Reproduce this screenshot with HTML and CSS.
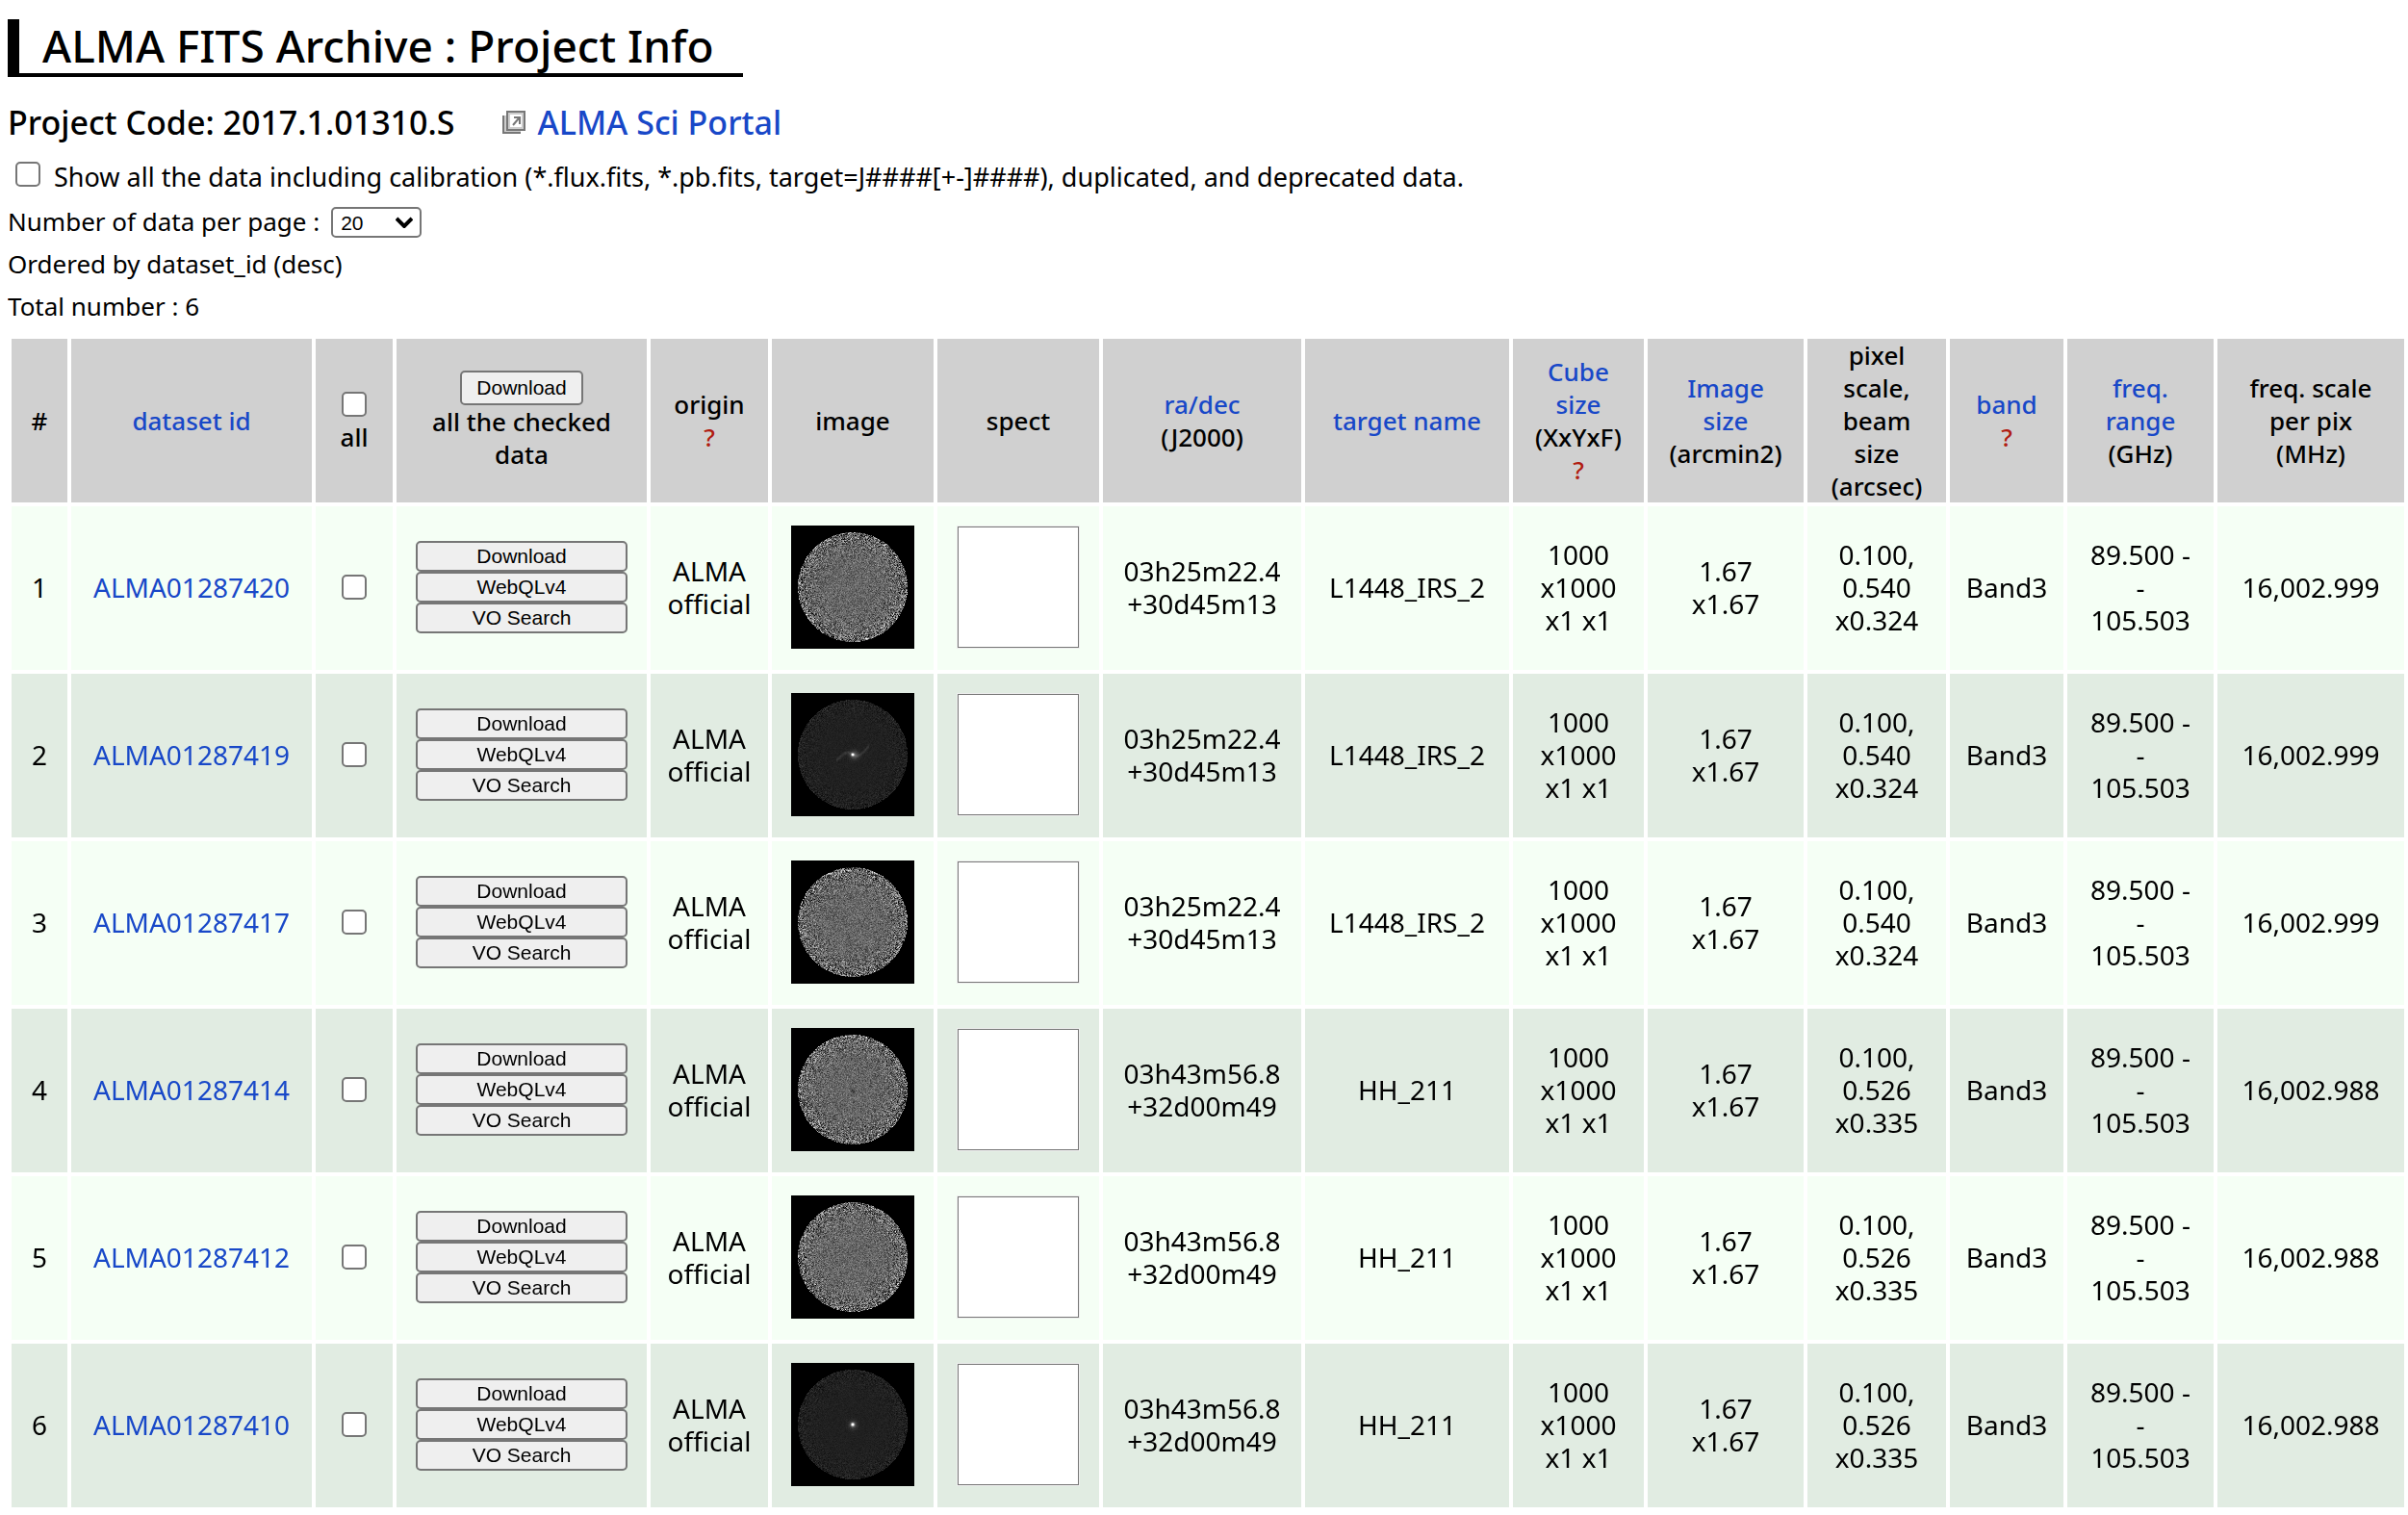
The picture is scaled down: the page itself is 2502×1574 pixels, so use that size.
FILE: index.html
```html
<!DOCTYPE html>
<html lang="en">
<head>
<meta charset="utf-8">
<title>ALMA FITS Archive : Project Info</title>
<link rel="stylesheet" href="styles.css">
</head>
<body>
<header>
  <h1>ALMA FITS Archive : Project Info</h1>
  <h2 class="project">
    <span>Project Code: 2017.1.01310.S</span>
    <a class="portal" href="#portal">
      <svg class="ext" viewBox="0 0 24 24" aria-hidden="true">
        <path d="M1 5V23H19" fill="none" stroke="#777" stroke-width="2"/>
        <path d="M3 5V21H19" fill="none" stroke="#ccc" stroke-width="2"/>
        <rect x="5" y="1" width="18" height="19" fill="#fff" stroke="#777" stroke-width="2"/>
        <rect x="7" y="3" width="14" height="15" fill="none" stroke="#ccc" stroke-width="2"/>
        <path d="M11 15L17 8M12 7H18V14" fill="none" stroke="#777" stroke-width="2"/>
      </svg>
      <span>ALMA Sci Portal</span>
    </a>
  </h2>
</header>
<form class="options">
  <div class="line show"><input type="checkbox" id="showall"><label for="showall">Show all the data including calibration (*.flux.fits, *.pb.fits, target=J####[+-]####), duplicated, and deprecated data.</label></div>
  <div class="line"><label for="perpage">Number of data per page :</label><span class="pick"><select id="perpage"><option>20</option><option>50</option><option>100</option></select><svg class="chev" viewBox="0 0 18 12" aria-hidden="true"><path d="M1 2L9 10L17 2" fill="none" stroke="#000" stroke-width="4"/></svg></span></div>
  <p class="line">Ordered by dataset_id (desc)</p>
  <p class="line">Total number : 6</p>
</form>
<table class="data">
  <colgroup><col class="c-num"><col class="c-id"><col class="c-all"><col class="c-dl"><col class="c-origin"><col class="c-pic"><col class="c-pic"><col class="c-radec"><col class="c-target"><col class="c-cube"><col class="c-size"><col class="c-scale"><col class="c-band"><col class="c-freq"><col class="c-pix"></colgroup>
  <thead>
  <tr>
    <th>#</th>
    <th><a href="#id">dataset id</a></th>
    <th><input type="checkbox" id="all"><label for="all">all</label></th>
    <th><button class="get" type="button">Download</button>all the checked<br>data</th>
    <th>origin<br><a class="help" href="#h1">?</a></th>
    <th>image</th>
    <th>spect</th>
    <th><a href="#radec">ra/dec</a><br>(J2000)</th>
    <th><a href="#target">target name</a></th>
    <th><a href="#cube">Cube<br>size</a><br>(XxYxF)<br><a class="help" href="#h2">?</a></th>
    <th><a href="#size">Image<br>size</a><br>(arcmin2)</th>
    <th>pixel<br>scale,<br>beam<br>size<br>(arcsec)</th>
    <th><a href="#band">band</a><br><a class="help" href="#h3">?</a></th>
    <th><a href="#freq">freq.<br>range</a><br>(GHz)</th>
    <th>freq. scale<br>per pix<br>(MHz)</th>
  </tr>
  </thead>
  <tbody>
  <tr>
    <td>1</td><td><a href="#d1">ALMA01287420</a></td><td><input type="checkbox" aria-label="ALMA01287420"></td>
    <td><button type="button">Download</button><button type="button">WebQLv4</button><button type="button">VO Search</button></td>
    <td>ALMA<br>official</td><td class="pic"><canvas class="sky" width="128" height="128" data-kind="noise"></canvas></td><td class="pic"><div class="spect"></div></td>
    <td>03h25m22.4<br>+30d45m13</td><td>L1448_IRS_2</td><td>1000<br>x1000<br>x1 x1</td><td>1.67<br>x1.67</td><td>0.100,<br>0.540<br>x0.324</td><td>Band3</td><td>89.500 -<br>-<br>105.503</td><td>16,002.999</td>
  </tr>
  <tr>
    <td>2</td><td><a href="#d2">ALMA01287419</a></td><td><input type="checkbox" aria-label="ALMA01287419"></td>
    <td><button type="button">Download</button><button type="button">WebQLv4</button><button type="button">VO Search</button></td>
    <td>ALMA<br>official</td><td class="pic"><canvas class="sky" width="128" height="128" data-kind="wings"></canvas></td><td class="pic"><div class="spect"></div></td>
    <td>03h25m22.4<br>+30d45m13</td><td>L1448_IRS_2</td><td>1000<br>x1000<br>x1 x1</td><td>1.67<br>x1.67</td><td>0.100,<br>0.540<br>x0.324</td><td>Band3</td><td>89.500 -<br>-<br>105.503</td><td>16,002.999</td>
  </tr>
  <tr>
    <td>3</td><td><a href="#d3">ALMA01287417</a></td><td><input type="checkbox" aria-label="ALMA01287417"></td>
    <td><button type="button">Download</button><button type="button">WebQLv4</button><button type="button">VO Search</button></td>
    <td>ALMA<br>official</td><td class="pic"><canvas class="sky" width="128" height="128" data-kind="noise"></canvas></td><td class="pic"><div class="spect"></div></td>
    <td>03h25m22.4<br>+30d45m13</td><td>L1448_IRS_2</td><td>1000<br>x1000<br>x1 x1</td><td>1.67<br>x1.67</td><td>0.100,<br>0.540<br>x0.324</td><td>Band3</td><td>89.500 -<br>-<br>105.503</td><td>16,002.999</td>
  </tr>
  <tr>
    <td>4</td><td><a href="#d4">ALMA01287414</a></td><td><input type="checkbox" aria-label="ALMA01287414"></td>
    <td><button type="button">Download</button><button type="button">WebQLv4</button><button type="button">VO Search</button></td>
    <td>ALMA<br>official</td><td class="pic"><canvas class="sky" width="128" height="128" data-kind="dip"></canvas></td><td class="pic"><div class="spect"></div></td>
    <td>03h43m56.8<br>+32d00m49</td><td>HH_211</td><td>1000<br>x1000<br>x1 x1</td><td>1.67<br>x1.67</td><td>0.100,<br>0.526<br>x0.335</td><td>Band3</td><td>89.500 -<br>-<br>105.503</td><td>16,002.988</td>
  </tr>
  <tr>
    <td>5</td><td><a href="#d5">ALMA01287412</a></td><td><input type="checkbox" aria-label="ALMA01287412"></td>
    <td><button type="button">Download</button><button type="button">WebQLv4</button><button type="button">VO Search</button></td>
    <td>ALMA<br>official</td><td class="pic"><canvas class="sky" width="128" height="128" data-kind="noise"></canvas></td><td class="pic"><div class="spect"></div></td>
    <td>03h43m56.8<br>+32d00m49</td><td>HH_211</td><td>1000<br>x1000<br>x1 x1</td><td>1.67<br>x1.67</td><td>0.100,<br>0.526<br>x0.335</td><td>Band3</td><td>89.500 -<br>-<br>105.503</td><td>16,002.988</td>
  </tr>
  <tr>
    <td>6</td><td><a href="#d6">ALMA01287410</a></td><td><input type="checkbox" aria-label="ALMA01287410"></td>
    <td><button type="button">Download</button><button type="button">WebQLv4</button><button type="button">VO Search</button></td>
    <td>ALMA<br>official</td><td class="pic"><canvas class="sky" width="128" height="128" data-kind="star"></canvas></td><td class="pic"><div class="spect"></div></td>
    <td>03h43m56.8<br>+32d00m49</td><td>HH_211</td><td>1000<br>x1000<br>x1 x1</td><td>1.67<br>x1.67</td><td>0.100,<br>0.526<br>x0.335</td><td>Band3</td><td>89.500 -<br>-<br>105.503</td><td>16,002.988</td>
  </tr>
  </tbody>
</table>
<script src="sky.js"></script>
</body>
</html>
```
FILE: styles.css
```css
* { box-sizing: border-box; }
body {
  margin: 20px 0 0 8px;
  background: #fff;
  color: #000;
  font: 26px/44px "Noto Sans", "Open Sans", sans-serif;
}
a { color: #1848c8; text-decoration: none; }
a.help { color: #b01c10; }

h1 {
  width: fit-content;
  margin: 0;
  padding: 0 30px 2px 24px;
  border-left: 12px solid #000;
  border-bottom: 4px solid #000;
  font-size: 46px;
  line-height: 54px;
  font-weight: 500;
}
.project {
  display: flex;
  gap: 50px;
  margin: 23px 0 11px;
  font-size: 34px;
  line-height: 48px;
  font-weight: 500;
}
.portal { display: flex; align-items: center; gap: 12px; }
.ext { width: 24px; height: 24px; }

.line { display: flex; align-items: center; margin: 0; }
.show { margin-bottom: 2px; padding-left: 8px; gap: 14px; font-size: 27px; }

input[type="checkbox"] {
  appearance: none;
  display: block;
  width: 26px;
  height: 26px;
  margin: 0;
  border: 2px solid #767676;
  border-radius: 5px;
  background: #fff;
}
.show input[type="checkbox"] { margin-bottom: 6px; }
.data input[type="checkbox"] { margin: 4px auto; }

.pick { display: grid; align-items: center; margin: 2px 0 0 12px; }
.pick > * { grid-area: 1 / 1; }
select {
  appearance: none;
  width: 94px;
  height: 32px;
  padding: 0 8px;
  border: 2px solid #767676;
  border-radius: 5px;
  background: #fff;
  color: #000;
  font: 21px "Liberation Sans", Arial, sans-serif;
}
.chev { width: 18px; height: 12px; justify-self: end; margin-right: 9px; pointer-events: none; }

.data {
  width: 100%;
  margin-top: 8px;
  table-layout: fixed;
  border-spacing: 4px;
  text-align: center;
  white-space: nowrap;
}
.c-num { width: 58px; }
.c-id { width: 250px; }
.c-all { width: 80px; }
.c-dl { width: 260px; }
.c-origin { width: 122px; }
.c-pic { width: 168px; }
.c-radec { width: 206px; }
.c-target { width: 212px; }
.c-cube { width: 136px; }
.c-size { width: 162px; }
.c-scale { width: 144px; }
.c-band { width: 118px; }
.c-freq { width: 152px; }
.c-pix { width: 194px; }

th, td { height: 170px; padding: 0 0 2px; line-height: 34px; vertical-align: middle; }
th { padding: 0; background: #d0d0d0; font-size: 26px; font-weight: 500; }
td { background: #f5fff5; font-size: 28px; }
tr:nth-child(even) td { background: #e1ece2; }

button {
  display: block;
  width: 220px;
  height: 32px;
  margin: 0 auto;
  padding: 0;
  border: 2px solid #767676;
  border-radius: 5px;
  background: #efefef;
  color: #000;
  font: 21px "Liberation Sans", Arial, sans-serif;
}
.get { width: 128px; height: 36px; }

td.pic { padding: 0 20px 2px; }
.sky { display: block; width: 128px; height: 128px; background: #000; }
.spect {
  width: 128px;
  height: 128px;
  border: solid #eee;
  border-width: 1px 1px 1px 2px;
  outline: 1px solid #777;
  outline-offset: -2px;
  background: #fff;
}
```
FILE: sky.js
```js
// Draws the thumbnails: primary-beam noise that grows towards the edge, plus the source.
let seed = 20170;
const rnd = () => {
  seed = (seed * 1664525 + 1013904223) % 4294967296;
  return seed / 4294967296;
};
const gauss = () => rnd() + rnd() + rnd() + rnd() - 2;
const blob = (x, y, cx, cy, s) => Math.exp(-((x - cx) ** 2 + (y - cy) ** 2) / (2 * s * s));

for (const canvas of document.querySelectorAll(".sky")) {
  const kind = canvas.dataset.kind;
  const dark = kind === "wings" || kind === "star";
  const ctx = canvas.getContext("2d");
  const img = ctx.createImageData(128, 128);
  for (let y = 0; y < 128; y++) {
    for (let x = 0; x < 128; x++) {
      const r = Math.hypot(x - 63.5, y - 63.5) / 57;
      let v = 0;
      if (r <= 1) {
        const grow = r ** 4;
        v = dark ? 32 + gauss() * (5 + 17 * grow) : 102 + gauss() * (30 + 80 * grow);
        if (kind === "dip") v -= 40 * blob(x, y, 64, 65, 2);
        if (kind === "star") v += 230 * blob(x, y, 63.5, 63.5, 1.2) + 50 * blob(x, y, 64, 64, 3);
        if (kind === "wings") {
          v += 230 * blob(x, y, 63.5, 63.5, 1) + 60 * blob(x, y, 65, 64, 3);
          const dx = x - 63.5;
          const arm = 63.5 + 3 * Math.sin(dx / 4) - (dx > 0 ? dx / 3 : dx / 6);
          if (Math.abs(dx) < 17) v += 22 * Math.exp(-((y - arm) ** 2) / 3);
        }
      }
      const i = (y * 128 + x) * 4;
      img.data[i] = img.data[i + 1] = img.data[i + 2] = v;
      img.data[i + 3] = 255;
    }
  }
  ctx.putImageData(img, 0, 0);
}
```
